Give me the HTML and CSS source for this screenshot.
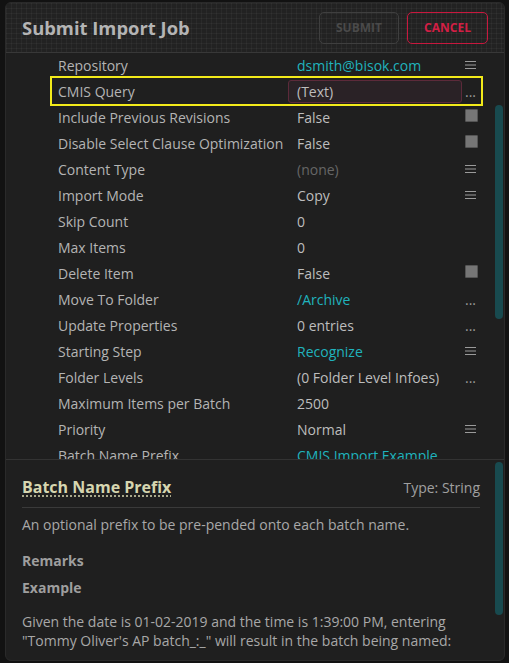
FILE: index.html
```html
<!DOCTYPE html>
<html>
<head>
<meta charset="utf-8">
<link rel="stylesheet" href="styles.css">
</head>
<body>
<div class="dialog">
  <div class="header">
    <h1 class="title">Submit Import Job</h1>
    <div class="actions">
      <button class="btn btn-submit">SUBMIT</button>
      <button class="btn btn-cancel">CANCEL</button>
    </div>
  </div>
  <div class="grid-wrap">
    <div class="rows">
      <div class="row"><span class="lbl">Repository</span><span class="val teal">dsmith@bisok.com</span><span class="ico"><svg width="11" height="10" viewBox="0 0 11 10"><path d="M0 1.5H11M0 5H11M0 8.5H11" stroke="#9a9a9a" stroke-width="1"/></svg></span></div>
      <div class="row sel"><span class="lbl">CMIS Query</span><span class="val"><span class="input">(Text)</span></span><span class="ico dots">...</span></div>
      <div class="row"><span class="lbl">Include Previous Revisions</span><span class="val">False</span><span class="ico"><span class="chk"></span></span></div>
      <div class="row"><span class="lbl">Disable Select Clause Optimization</span><span class="val">False</span><span class="ico"><span class="chk"></span></span></div>
      <div class="row"><span class="lbl">Content Type</span><span class="val dim">(none)</span><span class="ico"><svg width="11" height="10" viewBox="0 0 11 10"><path d="M0 1.5H11M0 5H11M0 8.5H11" stroke="#9a9a9a" stroke-width="1"/></svg></span></div>
      <div class="row"><span class="lbl">Import Mode</span><span class="val">Copy</span><span class="ico"><svg width="11" height="10" viewBox="0 0 11 10"><path d="M0 1.5H11M0 5H11M0 8.5H11" stroke="#9a9a9a" stroke-width="1"/></svg></span></div>
      <div class="row"><span class="lbl">Skip Count</span><span class="val">0</span><span class="ico"></span></div>
      <div class="row"><span class="lbl">Max Items</span><span class="val">0</span><span class="ico"></span></div>
      <div class="row"><span class="lbl">Delete Item</span><span class="val">False</span><span class="ico"><span class="chk"></span></span></div>
      <div class="row"><span class="lbl">Move To Folder</span><span class="val teal">/Archive</span><span class="ico dots">...</span></div>
      <div class="row"><span class="lbl">Update Properties</span><span class="val">0 entries</span><span class="ico dots">...</span></div>
      <div class="row"><span class="lbl">Starting Step</span><span class="val teal">Recognize</span><span class="ico"><svg width="11" height="10" viewBox="0 0 11 10"><path d="M0 1.5H11M0 5H11M0 8.5H11" stroke="#9a9a9a" stroke-width="1"/></svg></span></div>
      <div class="row"><span class="lbl">Folder Levels</span><span class="val">(0 Folder Level Infoes)</span><span class="ico dots">...</span></div>
      <div class="row"><span class="lbl">Maximum Items per Batch</span><span class="val">2500</span><span class="ico"></span></div>
      <div class="row"><span class="lbl">Priority</span><span class="val">Normal</span><span class="ico"><svg width="11" height="10" viewBox="0 0 11 10"><path d="M0 1.5H11M0 5H11M0 8.5H11" stroke="#9a9a9a" stroke-width="1"/></svg></span></div>
      <div class="row"><span class="lbl">Batch Name Prefix</span><span class="val teal">CMIS Import Example</span><span class="ico"></span></div>
    </div>
    <div class="scroll scroll-top"></div>
  </div>
  <div class="help">
    <div class="help-head">
      <span class="help-title">Batch Name Prefix</span>
      <span class="help-type">Type: String</span>
    </div>
    <p class="desc">An optional prefix to be pre-pended onto each batch name.</p>
    <h3 class="sub">Remarks</h3>
    <h3 class="sub">Example</h3>
    <p class="example">Given the date is 01-02-2019 and the time is 1:39:00 PM, entering "Tommy Oliver's AP batch_:_" will result in the batch being named:</p>
    <div class="scroll scroll-help"></div>
  </div>
</div>
</body>
</html>
```

FILE: styles.css
```css
* { box-sizing: border-box; }
html, body { margin: 0; padding: 0; }
body {
  background: #121212;
  font-family: "Open Sans", "Liberation Sans", sans-serif;
  width: 509px;
  height: 663px;
  padding: 2px 4px 2px 5px;
  overflow: hidden;
}
.dialog {
  width: 500px;
  height: 659px;
  background: #1f1f1f;
  border-radius: 6px;
  overflow: hidden;
  display: flex;
  flex-direction: column;
  border: 1px solid #2a2a2a;
}
.header {
  height: 50px;
  flex: none;
  display: flex;
  align-items: center;
  justify-content: space-between;
  padding: 0 16px 0 16px;
  border-bottom: 1px solid #383838;
  background-color: #222222;
  background-image:
    linear-gradient(rgba(255,255,255,0.035) 1px, transparent 1px),
    linear-gradient(90deg, rgba(255,255,255,0.035) 1px, transparent 1px);
  background-size: 5px 5px;
}
.title {
  margin: 0;
  font-size: 18.4px;
  font-weight: 700;
  color: #b4b4b4;
  letter-spacing: 0;
}
.actions { display: flex; gap: 8px; margin-top: 0; }
.btn {
  height: 32px;
  width: 80px;
  border-radius: 5px;
  background: transparent;
  font-family: "Open Sans", "Liberation Sans", sans-serif;
  font-weight: 700;
  font-size: 12px;
  padding: 0;
}
.btn-submit { border: 1px solid #3f3f3f; color: #4a4a4a; }
.btn-cancel { border: 1px solid #c8183e; color: #d21f45; width: 81px; }
.grid-wrap {
  position: relative;
  height: 407px;
  flex: none;
  overflow: hidden;
  border-bottom: 1px solid #333;
}
.rows {
  margin-left: 46px;
  margin-top: -1px;
  width: 429px;
  display: flex;
  flex-direction: column;
}
.row {
  height: 26px;
  display: flex;
  align-items: center;
  font-size: 14px;
  color: #b4b4b4;
}
.row.sel { outline: 2px solid #f2ea1a; }
.lbl { width: 236px; padding-left: 6px; white-space: nowrap; overflow: hidden; }
.val { width: 174px; padding-left: 9px; color: #bdbdbd; white-space: nowrap; display: flex; align-items: center; height: 100%; }
.val.teal { color: #1fb3bd; }
.val.dim { color: #666; }
.ico { width: 19px; display: flex; align-items: center; justify-content: flex-start; padding-left: 3px; color: #9a9a9a; }
.ico.dots { font-size: 14px; letter-spacing: 0; }
.input {
  margin-left: -9px;
  width: 174px;
  height: 23px;
  border: 1px solid #5c2a3a;
  background: #2a2226;
  border-radius: 3px;
  padding-left: 8px;
  display: flex;
  align-items: center;
  color: #bdbdbd;
}
.chk {
  width: 13px;
  height: 13px;
  background: #767676;
  border: 1px solid #555;
  border-radius: 1px;
  margin-bottom: 3px;
}
.scroll {
  position: absolute;
  right: 1px;
  width: 8px;
  background: #184a4f;
  border-radius: 4px;
}
.scroll-top { top: 52px; height: 214px; }
.help {
  position: relative;
  flex: 1;
  padding: 15px 24px 0 16px;
  color: #a8a8a8;
  font-size: 14px;
}
.help-head {
  display: flex;
  justify-content: space-between;
  align-items: center;
  padding: 1px 0 9px 0;
  border-bottom: 1px solid #3a3a3a;
}
.help-title {
  font-size: 16px;
  font-weight: 700;
  color: #d6d6b0;
  text-decoration: underline dotted;
  text-underline-offset: 3px;
}
.help-type { font-size: 14px; color: #a0a0a0; }
.desc { margin: 7px 0 16px 0; }
.sub { margin: 0 0 6px 0; font-size: 14px; font-weight: 700; color: #9e9e9e; line-height: 21px; }
.example { margin: 14px 0 0 0; line-height: 19px; }
.scroll-help { top: 2px; height: 153px; }
```
